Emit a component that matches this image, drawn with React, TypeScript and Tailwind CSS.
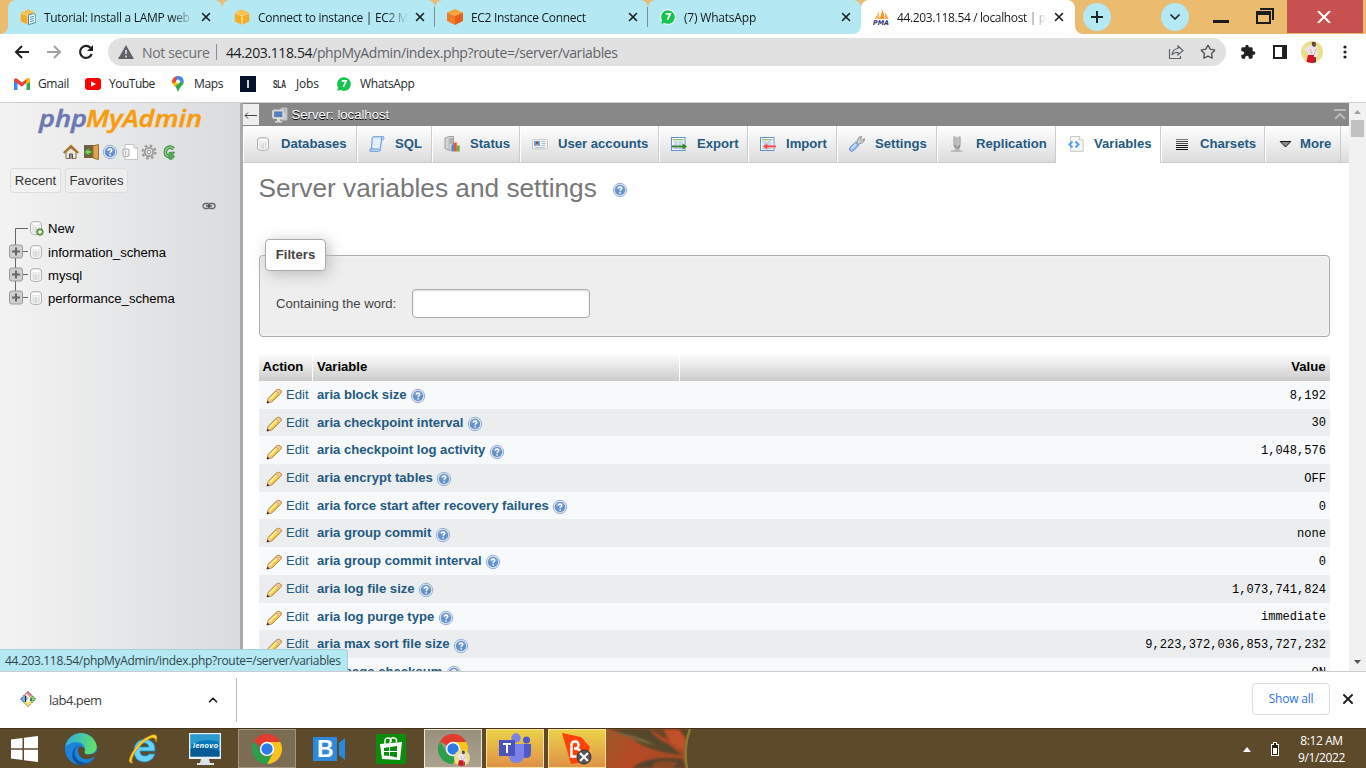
import React from "react";
import { Star, ChevronDown, ChevronUp, X } from "lucide-react";
import { MdExtension } from "react-icons/md";

const UI = "font-['Open_Sans','Noto_Sans',sans-serif]";
const ARIAL = "font-['Liberation_Sans',Arial,sans-serif]";

/* ---------- small drawings ---------- */

function Help({ className = "" }: { className?: string }) {
  return (
    <svg viewBox="0 0 16 16" className={"h-4 w-4 shrink-0 " + className}>
      <circle cx="8" cy="8" r="6.7" fill="#e9f0f8" stroke="#7f9fc9" strokeWidth="0.8" />
      <circle cx="8" cy="8" r="5" fill="#6592cb" stroke="#5a83ba" strokeWidth="0.5" />
      <path d="M4 6.500a4.300 4.300 0 0 1 8 0Q8 8 4 6.500" fill="#86abdc" />
      <path d="M6.200 6.600Q6.400 5 8 5T9.800 6.500Q9.800 7.300 8.200 8.200V9.200" fill="none" stroke="#fff" strokeWidth="1.300" />
      <rect x="7.400" y="10.200" width="1.500" height="1.400" fill="#fff" />
    </svg>
  );
}

function DbIcon({ plus = false }: { plus?: boolean }) {
  return (
    <svg viewBox="0 0 16 16" className="h-4 w-4 shrink-0">
      <path d="M2.5 4Q2.500 1.500 8 1.500T13.500 4V12Q13.500 14.500 8 14.500T2.500 12Z" fill="#f8f8f8" stroke="#b0b0b0" />
      <path d="M4.500 6.500Q8 8 11.500 6.500V12.500Q8 14 4.500 12.500Z" fill="#dadada" />
      <path d="M6 7v6M9.500 7v6" stroke="#efefef" />
      <ellipse cx="8" cy="4" rx="4.600" ry="1.800" fill="#fff" stroke="#cfcfcf" strokeWidth="0.500" />
      {plus && (
        <g>
          <circle cx="12" cy="12" r="3.300" fill="#6ea648" stroke="#3f7a24" strokeWidth="0.700" />
          <path d="M10 12h4M12 10v4" stroke="#fff" strokeWidth="1.300" />
        </g>
      )}
    </svg>
  );
}

function Pencil() {
  return (
    <svg viewBox="0 0 16 16" className="h-4 w-4 shrink-0">
      <path d="M1 15L2.200 10.400L10.600 2Q12.500.6 14.400 2T14.800 5L5.900 13.800Z" fill="#f7cf48" stroke="#a9722a" strokeWidth="1" />
      <path d="M3.600 11.400L11 4" stroke="#fff0a0" strokeWidth="1.700" />
      <path d="M10.800 2.200Q12.500 1 14 2.300T14.300 5L13.200 6L9.900 3Z" fill="#f3c3a0" />
      <path d="M9.900 3L13.200 6" stroke="#c8b48a" strokeWidth="1" />
      <path d="M1 15L2.200 10.600L5.600 13.600Z" fill="#e8cfa4" />
      <path d="M.8 15.200L1.500 12.500L3.600 14.500Z" fill="#402a16" />
    </svg>
  );
}

function NavIcon({ name }: { name: string }) {
  const cls = "h-4 w-4 shrink-0";
  switch (name) {
    case "db":
      return <DbIcon />;
    case "sql":
      return (
        <svg viewBox="0 0 16 16" className={cls}>
          <path d="M4 .7H14.500Q15.800 2.300 14 3.700H12.700L11 14.500Q10.500 15.500 9.500 15.300H1Q.3 14 1.500 12.800H2.500L3.200 2.200Q3.300 1 4 .7Z" fill="#cfe2f8" stroke="#6a9ad4" />
          <path d="M4.500 2.500H11.500L10.200 12.500H3.700Z" fill="#e3effc" />
          <path d="M1.500 13H9.500L11 14.500M12.700 3.700L12.500 1.500" stroke="#5f92cf" fill="none" />
        </svg>
      );
    case "status":
      return (
        <svg viewBox="0 0 16 16" className={cls}>
          <path d="M1 2L5 .5H9.500V13L5.500 14.500L1 12.500Z" fill="#d6d6d6" stroke="#8b8b8b" strokeWidth=".8" />
          <path d="M5 2.500V14" stroke="#aaa" strokeWidth=".7" />
          <path d="M5.500 3H9M5.500 5H9M5.500 7H9" stroke="#858585" strokeWidth=".9" />
          <path d="M7.500 8.500H9.800V15.500H7.500z" fill="#4b83de" />
          <path d="M10 6.500H12.800V15.500H10z" fill="#e8582e" />
          <path d="M13 9.500H15.700V15.500H13z" fill="#63b23c" />
        </svg>
      );
    case "users":
      return (
        <svg viewBox="0 0 16 16" className={cls}>
          <rect x=".5" y="3.500" width="15" height="9.500" rx="1" fill="#f3f3f3" stroke="#c9c9c9" />
          <rect x="2" y="5" width="6" height="5" fill="#6ba3e2" />
          <circle cx="5" cy="6.800" r="1.300" fill="#874e25" />
          <path d="M3 10Q5 6.800 7 10" fill="#e6a35b" />
          <path d="M9.500 5.500h4M9.500 7.500h4M9.500 9.500h4M3 11.700h10" stroke="#a8bfd8" />
        </svg>
      );
    case "export":
    case "import": {
      const exp = name === "export";
      return (
        <svg viewBox="0 0 16 16" className={cls}>
          <rect x=".5" y="1.500" width="13.500" height="13" fill="#fff" stroke="#5f8fd0" />
          <path d="M2 3.700h10.500" stroke="#8dbb7c" strokeWidth="1.300" />
          <path d="M2 6h10.500M2 8h10.500M2 10h10.500M2 12.500h10.500M5 5v8.500M9 5v8.500" stroke="#a9c3e4" strokeWidth=".9" />
          {exp ? (
            <path d="M1 9.500h10.500V7.300L16 10.500L11.500 13.700V11.500H1Z" fill="#37852c" />
          ) : (
            <path d="M16 9.300H7.500V7L2.500 10.400L7.500 13.800V11.500H16Z" fill="#ef4a4a" stroke="#fbd0d0" strokeWidth=".4" />
          )}
        </svg>
      );
    }
    case "settings":
      return (
        <svg viewBox="0 0 16 16" className={cls}>
          <path d="M7.500 7L9 8.500L13.200 6.800Q16 5.500 15.300 2.500L13 4.300L11.500 3L12.700.5Q9.500.3 8.700 3.500Z" fill="#ccc" stroke="#8a8a8a" strokeWidth=".9" />
          <path d="M6.600 6.200L9.800 9.300L4.500 14.700Q2.500 16 1 14.500T1 11.300Z" fill="#9bbcf0" stroke="#5b85c7" strokeWidth=".9" />
          <path d="M2.700 12.500L7 8" stroke="#d5e5ff" strokeWidth="1.300" />
        </svg>
      );
    case "replication":
      return (
        <svg viewBox="0 0 16 16" className={cls}>
          <path d="M4.500 .5V9Q5 11.500 7 12T9.500 9V.5" fill="none" stroke="#8e8e8e" strokeWidth="2" />
          <path d="M4.200 .5V9M9.200 .5V9" stroke="#d5d5d5" strokeWidth=".8" />
          <path d="M7 1V14.500" stroke="#a5a5a5" strokeWidth="1.400" />
          <path d="M1 15.200H12.500M4 14H10" stroke="#b0b0b0" strokeWidth="1.200" />
        </svg>
      );
    case "variables":
      return (
        <svg viewBox="0 0 16 16" className={cls}>
          <path d="M2.500 .5H11.500L15.200 4V15.300H2.500Z" fill="#f7f7f7" stroke="#c8c8c8" />
          <path d="M11.500 .5V4H15" fill="#fff" stroke="#c4c4c4" />
          <path d="M4.500 5.500L1.500 8.500L4.500 11.500M7.500 5.500L10.500 8.500L7.500 11.500" fill="none" stroke="#58a0ec" strokeWidth="2" />
        </svg>
      );
    case "charsets":
      return (
        <svg viewBox="0 0 16 16" className={cls} shapeRendering="crispEdges">
          <path d="M2 3.500h12" stroke="#777" />
          <path d="M2 5.500h12M2 7.500h12" stroke="#444" />
          <path d="M2 9.500h12M2 11.500h12M2 13.500h12" stroke="#111" />
        </svg>
      );
    default:
      return (
        <svg viewBox="0 0 16 16" className={cls}>
          <path d="M2.200 5.500H12.800L7.500 11Z" fill="#8d8d8d" stroke="#111" strokeWidth="1" />
        </svg>
      );
  }
}

function WhatsIcon() {
  return (
    <svg viewBox="0 0 16 16" className="h-4 w-4 shrink-0">
      <circle cx="8" cy="8" r="7.800" fill="#fff" />
      <path d="M8 1.200a6.800 6.800 0 1 1-3.200 12.800L1.300 14.800L2.100 11.400A6.800 6.800 0 0 1 8 1.200Z" fill="#13c44d" />
      <path d="M5.700 4.900H10.200L7.400 11" fill="none" stroke="#fff" strokeWidth="1.700" />
    </svg>
  );
}

function AwsBox({ doc = false }: { doc?: boolean }) {
  return (
    <svg viewBox="0 0 16 16" className="h-4 w-4 shrink-0">
      <path d="M.8 4L8 .6L15.200 4V12.400L8 15.700L.8 12.400Z" fill="#f3ad24" />
      <path d="M1 4L8 7L15 4L8 .6Z" fill="#f8c04d" />
      <path d="M7.600 6.500v9h.8v-9z" fill="#fff" />
      <path d="M.8 4L8 6.900L15.200 4" fill="none" stroke="#fae3af" strokeWidth=".7" />
      {doc && (
        <g>
          <path d="M8.500 6L13.500 4.500L15.800 6V13.500L8.500 15.600Z" fill="#fff" stroke="#3b8ac4" />
          <path d="M10 8.300l4-1M10 10.500l4-1M10 12.700l4-1" stroke="#3b8ac4" />
        </g>
      )}
    </svg>
  );
}

function OrangeCube() {
  return (
    <svg viewBox="0 0 16 16" className="h-4 w-4 shrink-0">
      <path d="M8 0L16 3.500L8 7L0 3.500Z" fill="#f9a13a" />
      <path d="M0 3.500L8 7V16L0 12Z" fill="#f47b25" />
      <path d="M16 3.500L8 7V16L16 12Z" fill="#e75f1b" />
    </svg>
  );
}

function PmaIcon() {
  return (
    <svg viewBox="0 0 16 16" className="h-4 w-4 shrink-0">
      <path d="M1.500 10Q5 6 5.500 2L6.500 10Z" fill="#fbb563" />
      <path d="M6 10Q9.500 5 8.500 0Q12 5 11 10Z" fill="#f89520" />
      <path d="M11.500 10Q13 6 11.700 3Q14.500 6 15.500 10Z" fill="#faaa4c" />
      <text x="0" y="15.500" textLength="16" lengthAdjust="spacingAndGlyphs" fontSize="6.500" fontWeight="800" fontStyle="italic" fontFamily="DejaVu Sans" fill="#33336c">PMA</text>
    </svg>
  );
}

function Avatar({ className }: { className: string }) {
  return (
    <svg viewBox="0 0 22 22" className={className}>
      <clipPath id="av"><circle cx="11" cy="11" r="11" /></clipPath>
      <g clipPath="url(#av)">
        <rect width="22" height="22" fill="#e9e08e" />
        <path d="M3 8L10 4L15 5L17 14L15 18H7V11L5 10Z" fill="#efe3e8" />
        <path d="M11 1Q15 0 15 3T13 6Q10 5 11 1Z" fill="#65483e" />
        <path d="M7 14H13V22H5Z" fill="#d01528" />
        <path d="M13 16h2v6h-2z" fill="#7a3b35" />
        <path d="M15 8L13 14M9 8L11 13" stroke="#c9b5be" />
      </g>
    </svg>
  );
}

function Chrome({ className }: { className: string }) {
  return (
    <svg viewBox="0 0 30 30" className={className}>
      <path d="M15 15L2 7.500A15 15 0 0 1 28 7.500Z" fill="#e33b2e" />
      <path d="M15 8H28.300A15 15 0 0 1 15 30L21.200 18.500Z" fill="#fcc31e" />
      <path d="M2 7.500L8.800 18.500A7 7 0 0 0 21.200 18.500L15 30A15 15 0 0 1 2 7.500Z" fill="#2c9f4b" />
      <circle cx="15" cy="15" r="7.200" fill="#fff" />
      <circle cx="15" cy="15" r="5.700" fill="#2a7de9" />
    </svg>
  );
}

/* ---------- browser frame ---------- */

const tabs = [
  { title: "Tutorial: Install a LAMP web server", icon: <AwsBox doc />, track: "tracking-[-0.3px]" },
  { title: "Connect to instance | EC2 Management", icon: <AwsBox />, track: "tracking-[-0.31px]" },
  { title: "EC2 Instance Connect", icon: <OrangeCube />, track: "tracking-[-0.31px]" },
  { title: "(7) WhatsApp", icon: <WhatsIcon />, track: "tracking-[-0.2px]" },
  { title: "44.203.118.54 / localhost | phpMyAdmin", icon: <PmaIcon />, track: "tracking-[-0.36px]" },
];

function TabStrip() {
  return (
    <div className="flex h-[34px] shrink-0 bg-[#ebbb70]">
      <div className="w-2 bg-[#b4e8f2]"><div className="h-full rounded-br-lg bg-[#ebbb70]" /></div>
      {tabs.map((t, i) => {
        const active = i === 4;
        return (
          <div key={t.title} className={active ? "w-[214px] bg-[#ebbb70]" : i === 3 ? "w-[213px] bg-gradient-to-b from-[#ebbb70] from-50% to-white to-50%" : i === 0 ? "w-[214px] bg-gradient-to-b from-[#ebbb70] from-50% to-[#b4e8f2] to-50%" : "w-[213px] bg-gradient-to-b from-[#ebbb70] from-50% to-[#b4e8f2] to-50%"}>
            <div className={"flex h-full items-center rounded-t-lg pl-3 " + (active ? "bg-white" : i === 3 ? "rounded-br-lg bg-[#b4e8f2]" : "bg-[#b4e8f2]")}>
              {t.icon}
              <div className={"ml-2 w-[150px] overflow-hidden whitespace-nowrap bg-gradient-to-r from-[#14191c] from-85% to-transparent bg-clip-text text-[12px] leading-[17px] text-transparent " + t.track}>{t.title}</div>
              <X className="ml-[5px] h-[14px] w-[14px] shrink-0 text-[#1d2124]" strokeWidth={2.8} />
              {i < 3 && <div className={"ml-auto h-5 w-px bg-[#7b8e94] " + (i === 0 ? "-mr-px" : "")} />}
            </div>
          </div>
        );
      })}
      <div className="flex flex-1 bg-white">
        <div className="flex flex-1 rounded-bl-lg bg-[#ebbb70] pl-2">
          <div className="mt-[3px] flex h-7 w-7 items-center justify-center rounded-full bg-[#b4e8f2]">
            <svg viewBox="0 0 12 12" className="h-3 w-3"><path d="M6 0v12M0 6h12" stroke="#1e2326" strokeWidth="2" /></svg>
          </div>
          <div className="ml-[50px] mt-[3px] flex h-7 w-7 items-center justify-center rounded-full bg-[#b4e8f2]"><ChevronDown className="h-4 w-4 text-[#1e2326]" strokeWidth={2.6} /></div>
          <div className="ml-6 mt-5 h-[3px] w-4 bg-[#1c1c1c]" />
          <svg viewBox="0 0 18 16" className="ml-[27px] mt-2 h-4 w-[18px]" shapeRendering="crispEdges">
            <path d="M4 1H17V12" fill="none" stroke="#1c1c1c" strokeWidth="2" />
            <path d="M1 4H14V15H1Z" fill="none" stroke="#1c1c1c" strokeWidth="2" /><path d="M0 4h15v3H0z" fill="#1c1c1c" />
          </svg>
          <div className="ml-[13px] flex h-[33px] w-[76px] items-center justify-center bg-[#c75050]">
            <svg viewBox="0 0 14 12" className="mr-[2px] h-3 w-[14px]"><path d="M1 0L13 12M13 0L1 12" stroke="#fff" strokeWidth="2" /></svg>
          </div>
        </div>
      </div>
    </div>
  );
}

function Toolbar() {
  return (
    <div className="flex h-9 shrink-0 items-center bg-white">
      <svg viewBox="0 0 16 14" className="ml-[14px] h-[14px] w-4"><path d="M8 1L2 7L8 13M2 7H15" fill="none" stroke="#202124" strokeWidth="2" /></svg>
      <svg viewBox="0 0 16 14" className="ml-4 h-[14px] w-4"><path d="M8 1L14 7L8 13M14 7H1" fill="none" stroke="#a1a2a4" strokeWidth="2" /></svg>
      <svg viewBox="0 0 16 16" className="ml-4 h-4 w-4"><path d="M13.700 10A6 6 0 1 1 12.500 3.800" fill="none" stroke="#202124" strokeWidth="2.200" /><path d="M15 1V7H9Z" fill="#202124" /></svg>
      <div className="ml-[14px] flex h-7 w-[1118px] items-center rounded-full bg-[#e1e1e1] text-[14px]">
        <svg viewBox="0 0 16 14" className="ml-[10px] h-[14px] w-4"><path d="M8 0L16 14H0Z" fill="#5f6368" /><path d="M8 5v4M8 10.500v2" stroke="#e1e1e1" strokeWidth="1.600" /></svg>
        <span className="ml-2 w-[74px] whitespace-nowrap tracking-[-0.34px] text-[#6c6f73]">Not secure</span>
        <span className="h-4 w-px bg-[#8b8d90]" />
        <span className="ml-[9px] whitespace-nowrap tracking-[-0.38px] text-[#5f6368]"><span className="text-[#202124]">44.203.118.54</span>/phpMyAdmin/index.php?route=/server/variables</span>
        <svg viewBox="0 0 16 16" className="ml-auto h-4 w-4"><path d="M1.500 5V14.500H12.500V12M10 2L15 6.500L10 11V8.500Q6 8 4 11Q4.500 5 10 4.500Z" fill="none" stroke="#5f6368" strokeWidth="1.200" /></svg>
        <Star className="ml-4 mr-[10px] h-4 w-4 text-[#505357]" strokeWidth={2} />
      </div>
      <MdExtension className="ml-[14px] h-4 w-4 text-[#202124]" />
      <svg viewBox="0 0 14 14" className="ml-[17px] h-[14px] w-[14px]"><path d="M1 1H13V13H1Z" fill="#fff" stroke="#202124" strokeWidth="2" /><path d="M9 0h5v14H9z" fill="#202124" /></svg>
      <Avatar className="ml-[14px] h-[22px] w-[22px]" />
      <svg viewBox="0 0 4 14" className="ml-5 h-[14px] w-1" fill="#202124"><circle cx="2" cy="2" r="1.600" /><circle cx="2" cy="7" r="1.600" /><circle cx="2" cy="12" r="1.600" /></svg>
    </div>
  );
}

function Bookmarks() {
  return (
    <div className="flex h-[33px] shrink-0 items-center border-b border-[#cfcfcf] bg-white pb-1 text-[12px] tracking-[-0.2px] text-[#24282c]">
      <svg viewBox="0 0 16 12" className="ml-[14px] h-3 w-4"><path d="M0 1.500V12H3.500V5Z" fill="#4285f4" /><path d="M12.500 5V12H16V1.500Z" fill="#34a853" /><path d="M0 1.500Q1.500-.5 3.500 1L8 4.500L12.500 1Q14.500-.5 16 1.500L8 8.700L0 3Z" fill="#ea4335" /><path d="M12.500 1Q14.500-.5 16 1.500V4L12.500 6.300Z" fill="#fbbc04" /></svg>
      <span className="ml-2 w-[39px] tracking-[-0.35px]">Gmail</span>
      <svg viewBox="0 0 16 12" className="ml-2 h-3 w-4"><rect width="16" height="12" rx="3" fill="#f00" /><path d="M6 3.200L11 6L6 8.800Z" fill="#fff" /></svg>
      <span className="ml-2 w-[54px] tracking-[-0.5px]">YouTube</span>
      <svg viewBox="0 0 12 16" className="ml-[9px] h-4 w-3"><path d="M6 16Q5 12 2 9Q0 7 .2 5L6 6L11.800 5Q12 8 9.500 10Q7 13 6 16Z" fill="#34a853" /><path d="M.2 6Q0 2 3 .8L8.500 5L3 11Q.5 8 .2 6Z" fill="#fbbc04" /><path d="M1 3Q3-.5 7 .1L4 6L.2 7Q0 4 1 3Z" fill="#ea4335" /><path d="M5 .1Q11.500-.3 11.800 6L8 5.500L4 3Z" fill="#4285f4" /><circle cx="6" cy="5.500" r="2.100" fill="#fff" /></svg>
      <span className="ml-[10px] w-[38px] tracking-[-0.35px]">Maps</span>
      <div className="ml-2 flex h-4 w-4 items-center justify-center bg-[#06122b]"><div className="h-2 w-[2px] bg-[#ccd0d8]" /></div>
      <svg viewBox="0 0 14 10" className="ml-[17px] h-[10px] w-[14px]"><text x="0" y="9" textLength="13" lengthAdjust="spacingAndGlyphs" fontSize="10" fontWeight="700" fontFamily="Liberation Sans" fill="#333">SLA</text></svg>
      <span className="ml-[9px] w-[34px]">Jobs</span>
      <div className="ml-[6px]"><WhatsIcon /></div>
      <span className="ml-2 tracking-[-0.35px]">WhatsApp</span>
    </div>
  );
}

/* ---------- phpMyAdmin ---------- */

function Tree() {
  const items = ["New", "information_schema", "mysql", "performance_schema"];
  return (
    <div className="mt-[6px] pl-2 text-[13.120px] leading-[23px] text-black">
      {items.map((n, i) => (
        <div key={n} className={"flex items-center " + (i === 0 ? "h-[24px]" : "h-[23.330px]")}>
          <svg viewBox="0 0 20 24" className="h-6 w-5 shrink-0">
            {i === 0 ? <path d="M7.500 24V12.500H21" fill="none" stroke="#666" /> : (
              <g>
                <path d={i === 3 ? "M7.500 0V12M14 11.500H21" : "M7.500 0V24M14 11.500H21"} stroke="#666" />
                <rect x="1.500" y="5" width="13" height="13" rx="2" fill="#cfcfcf" stroke="#999" />
                <path d="M4 11.500H12M8 7.500V15.500" stroke="#666" strokeWidth="2" />
              </g>
            )}
          </svg>
          <DbIcon plus={i === 0} />
          <span className="ml-1 pt-px">{n}</span>
        </div>
      ))}
    </div>
  );
}

function Sidebar() {
  return (
    <aside className="flex w-[243px] shrink-0 flex-col border-r-[3px] border-[#aaa] bg-gradient-to-r from-[#f3f3f3] to-[#d9dbdd]">
      <svg viewBox="0 0 168 32" className="ml-9 h-8 w-[168px] shrink-0" fontFamily="Open Sans" fontWeight="600" fontStyle="italic" fontSize="23">
        <text x="3" y="24" textLength="48" lengthAdjust="spacingAndGlyphs" fill="#6c78af" stroke="#6c78af" strokeWidth=".5">php</text>
        <text x="50" y="24" textLength="116" lengthAdjust="spacingAndGlyphs" fill="#f89c0e" stroke="#f89c0e" strokeWidth=".5">MyAdmin</text>
      </svg>
      <div className="ml-[63px] mt-[9px] flex gap-[3.600px]">
        <svg viewBox="0 0 16 16" className="h-4 w-4"><path d="M3 8V14.500H13V8L8 4Z" fill="#eee7dc" stroke="#86724c" /><path d="M6.500 15V10H9.500V15" fill="#999" stroke="#555" /><path d="M.7 9L8 2L15.300 9" fill="none" stroke="#a9712b" strokeWidth="2.200" /></svg>
        <svg viewBox="0 0 16 16" className="h-4 w-4"><path d="M1 1H14V14H1Z" fill="#765f45" /><path d="M10 2L15.500 .5V15.500L10 14Z" fill="#e0a352" stroke="#a56d27" /><path d="M8.500 6.500H6V4L1 8L6 12V9.500H8.500Z" fill="#84c75e" stroke="#3f8a2c" /></svg>
        <Help />
        <svg viewBox="0 0 16 16" className="h-4 w-4"><path d="M3 .5H12L15.500 4V15.500H3Z" fill="#fff" stroke="#c5c5c5" /><path d="M12 .5V4H15.500" fill="none" stroke="#bbb" /><path d="M1 5.500Q4 4 7 5.500V12Q4 13.500 1 12Z" fill="#eee" stroke="#aaa" /><path d="M3.500 7v4" stroke="#bbb" /></svg>
        <svg viewBox="0 0 16 16" className="h-4 w-4"><circle cx="8" cy="8" r="6.500" fill="none" stroke="#999" strokeWidth="2.200" strokeDasharray="2.600 2.500" /><circle cx="8" cy="8" r="4.300" fill="#ddd" stroke="#a0a0a0" strokeWidth="2" /><circle cx="8" cy="8" r="1.700" fill="#eee" stroke="#999" /></svg>
        <svg viewBox="0 0 16 16" className="h-4 w-4"><path d="M12.500 5Q10 2.200 7 3.700T4.500 9T8.500 12" fill="none" stroke="#3b8b3b" strokeWidth="3.600" /><path d="M12.500 5Q10 2.200 7 3.700T4.500 9T8.500 12" fill="none" stroke="#86c988" strokeWidth="1.800" /><path d="M8 8.500L13.500 8L12 10.500L13.500 13L10.500 15.500L8 15Z" fill="#57aa58" stroke="#3b8b3b" strokeWidth=".8" /></svg>
      </div>
      <div className="ml-[10px] mt-2 flex gap-1 text-[13.120px] text-[#333]">
        <div className="flex h-[25px] w-[51px] items-center justify-center whitespace-nowrap rounded-[3px] border border-[#ddd] bg-[#f2f2f2]">Recent</div>
        <div className="flex h-[25px] w-[63px] items-center justify-center whitespace-nowrap rounded-[3px] border border-[#ddd] bg-[#eeeeef]">Favorites</div>
      </div>
      <svg viewBox="0 0 14 8" className="ml-[202px] mt-[9px] h-2 w-[14px] shrink-0"><rect x="1" y="1.500" width="6.500" height="5" rx="2.500" fill="none" stroke="#666" strokeWidth="1.300" /><rect x="6.500" y="1.500" width="6.500" height="5" rx="2.500" fill="none" stroke="#666" strokeWidth="1.300" /><path d="M4 4h6" stroke="#444" strokeWidth="1.300" /></svg>
      <Tree />
    </aside>
  );
}

const nav = [
  { t: "Databases", i: "db", w: "w-[114px] pl-[11px]" },
  { t: "SQL", i: "sql", w: "w-[75px] pl-[11px]" },
  { t: "Status", i: "status", w: "w-[88px] pl-[11px]" },
  { t: "User accounts", i: "users", w: "w-[139px] pl-[11px]" },
  { t: "Export", i: "export", w: "w-[89px] pl-[11px]" },
  { t: "Import", i: "import", w: "w-[89px] pl-[11px]" },
  { t: "Settings", i: "settings", w: "w-[100px] pl-[11px]" },
  { t: "Replication", i: "replication", w: "w-[119px] pl-3" },
  { t: "Variables", i: "variables", w: "w-[105px] pl-[11px]" },
  { t: "Charsets", i: "charsets", w: "w-[104px] pl-3" },
  { t: "More", i: "more", w: "w-[76px] pl-3" },
];

const rows: [string, string][] = [
  ["aria block size", "8,192"],
  ["aria checkpoint interval", "30"],
  ["aria checkpoint log activity", "1,048,576"],
  ["aria encrypt tables", "OFF"],
  ["aria force start after recovery failures", "0"],
  ["aria group commit", "none"],
  ["aria group commit interval", "0"],
  ["aria log file size", "1,073,741,824"],
  ["aria log purge type", "immediate"],
  ["aria max sort file size", "9,223,372,036,853,727,232"],
  ["aria page checksum", "ON"],
];

function MainPanel() {
  return (
    <main className="flex min-w-0 flex-1 flex-col overflow-hidden bg-white">
      <div className="flex h-[23px] shrink-0 items-center bg-[#888]">
        <div className="flex h-[21px] w-4 items-center justify-center bg-[#eee]"><svg viewBox="0 0 14 8" className="h-2 w-[14px]"><path d="M4 1.500L1 4.500L4 7.500M1 4.500H13" fill="none" stroke="#444" /></svg></div>
        <svg viewBox="0 0 16 16" className="ml-[13px] h-4 w-4"><path d="M9 1H15V13H9Z" fill="#ccc" stroke="#bbb" /><path d="M10.500 3h3M10.500 5h3" stroke="#888" /><rect x=".7" y="3" width="11" height="8.500" rx="1" fill="#ccc" stroke="#ddd" /><rect x="2.200" y="4.500" width="8" height="5.500" fill="#537fc0" /><path d="M5 12H8V14H10V15.500H3V14H5Z" fill="#ddd" /></svg>
        <span className="ml-[3.500px] text-[13.120px] text-white [text-shadow:0_1px_0_#000]">Server: localhost</span>
        <svg viewBox="0 0 12 11" className="ml-auto mr-[3px] h-[11px] w-3"><path d="M0 1H12M1 10L6 5L11 10" fill="none" stroke="#b9b9b9" strokeWidth="2" /></svg>
      </div>
      <nav className="flex h-[37px] shrink-0 border-b border-[#ccc] bg-gradient-to-b from-white to-[#dcdcdc] text-[13.120px] font-bold text-[#235a81]">
        {nav.map((n) => (
          <div key={n.t} className={"flex shrink-0 items-center border-l border-r border-l-white border-r-[#ccc] " + n.w + (n.i === "variables" ? " -mb-px bg-white pb-[2px]" : " pb-px")}>
            <NavIcon name={n.i} />
            <span className={"whitespace-nowrap " + (n.i === "more" ? "ml-[6px]" : "ml-[10px]")}>{n.t}</span>
          </div>
        ))}
      </nav>
      <div className="flex h-[50px] shrink-0 items-center pl-[15.500px]">
        <h1 className="whitespace-nowrap text-[26.240px] leading-8 text-[#777]">Server variables and settings</h1>
        <Help className="ml-[15.500px] mt-[3px]" />
      </div>
      <fieldset className="ml-4 mt-[26px] h-[98px] w-[1071px] shrink-0 rounded border border-[#aaa] bg-[#eee] px-[5px] text-[13.120px] text-[#444] shadow-[inset_0_0_2px_#fff]">
        <legend className="flex h-8 w-[61px] items-center justify-center rounded-sm border border-[#aaa] bg-white font-bold shadow-[3px_3px_15px_#bbb]">Filters</legend>
        <div className="mt-[18px] flex items-center pl-[11px]">
          <label className="w-[136px] whitespace-nowrap">Containing the word:</label>
          <input className="h-[29px] w-[178px] rounded-sm border border-[#aaa] bg-white shadow-[inset_0_1px_2px_#ddd]" />
        </div>
      </fieldset>
      <div className="ml-4 mt-4 w-[1071px] shrink-0 text-[13.120px]">
        <div className="flex h-7 items-center bg-gradient-to-b from-white to-[#ccc] font-bold text-black">
          <div className="flex h-full w-[54px] items-center border-r border-white pl-[3.500px]">Action</div>
          <div className="flex h-full w-[367px] items-center border-r border-white pl-1">Variable</div>
          <div className="ml-auto pr-[4.500px]">Value</div>
        </div>
        {rows.map(([k, v], i) => (
          <div key={k} className={"flex h-[27.700px] items-center text-[#235a81] " + (i % 2 ? "bg-[#ebedee]" : "bg-[#f7f9fb]")}>
            <div className="flex w-[58px] items-center pl-[7.400px]"><div className="pt-[3px]"><Pencil /></div><span className="ml-[3.600px]">Edit</span></div>
            <span className="font-bold">{k}</span>
            <Help className="ml-[3.500px] mt-[3px]" />
            <span className="ml-auto pr-1 pt-[2px] font-['Liberation_Mono',monospace] text-[12.060px] text-black">{v}</span>
          </div>
        ))}
      </div>
    </main>
  );
}

function Scrollbar() {
  return (
    <div className="flex w-[17px] shrink-0 flex-col items-center bg-[#f1f1f1]">
      <svg viewBox="0 0 17 17" className="h-[17px] w-[17px] shrink-0"><path d="M5 11L8.500 7L12 11Z" fill="#a0a0a0" /></svg>
      <div className="h-[17px] w-[13px] bg-[#c1c1c1]" />
      <svg viewBox="0 0 17 17" className="mt-auto h-[17px] w-[17px]"><path d="M5 6L8.500 10L12 6Z" fill="#505050" /></svg>
    </div>
  );
}

/* ---------- bottom bars ---------- */

function DownloadBar() {
  return (
    <div className="flex h-[57px] shrink-0 items-center border-t border-[#ccc] bg-white">
      <svg viewBox="0 0 16 16" className="mb-[2px] ml-5 h-4 w-4"><path d="M8 0L12 4L8 8L4 4Z" fill="#f08789" /><path d="M12 4L16 8L12 12L8 8Z" fill="#8bcf73" /><path d="M8 8L12 12L8 16L4 12Z" fill="#f2e574" /><path d="M4 4L8 8L4 12L0 8Z" fill="#78b0ee" /><path d="M8 .5L15.500 8L8 15.500L.5 8Z" fill="none" stroke="#222" strokeWidth=".8" strokeDasharray="1.500 1.500" /><path d="M6 3L10 8M10 8L7 11" stroke="#fff" strokeWidth="1.500" /><path d="M5.500 5v6M11 7v3" stroke="#222" /></svg>
      <span className="ml-[13px] w-[157px] pt-[2px] text-[13px] tracking-[-0.5px] text-[#3c4043]">lab4.pem</span>
      <ChevronUp className="h-[14px] w-[14px] text-[#202124]" strokeWidth={3} />
      <div className="ml-4 h-11 w-px bg-[#b9b9b9]" />
      <div className="mb-[2px] ml-auto flex h-8 w-[78px] items-center justify-center rounded border border-[#dadce0] text-[12px] font-medium tracking-[-0.200px] text-[#2a73e8]">Show all</div>
      <X className="mb-[2px] ml-[10px] mr-[10px] h-4 w-4 text-[#202124]" strokeWidth={3} />
    </div>
  );
}

function Leaf() {
  return (
    <svg viewBox="0 0 100 39" className="absolute left-[602px] top-0 h-[39px] w-[100px]">
      <defs>
        <linearGradient id="leaf" x1="0" y1="0" x2="1" y2="0.300"><stop stopColor="#9a5a2a" /><stop offset=".5" stopColor="#b54a26" /><stop offset="1" stopColor="#a84a24" /></linearGradient>
        <filter id="soft"><feGaussianBlur stdDeviation="0.900" /></filter>
      </defs>
      <path d="M0 0H88Q82 20 85 39H0Z" fill="url(#leaf)" />
      <g filter="url(#soft)">
        <path d="M8 0H48Q52 9 66 15L80 26Q58 24 40 16Q26 6 8 0Z" fill="#55462a" />
        <path d="M12 3Q34 6 56 17L40 13Z" fill="#7d6a40" />
        <path d="M48 0H62L68 10L60 8Z" fill="#6b4527" />
        <path d="M62 2H84L82 22L70 14Z" fill="#c2512a" />
        <path d="M76 0H90L86 12Z" fill="#5a4528" />
        <path d="M30 39Q46 26 80 30L84 39Z" fill="#54422a" />
        <path d="M52 34Q64 30 76 34L70 39H50Z" fill="#8a4a28" />
      </g>
      <path d="M88 0Q81 20 85 39" stroke="#8a7a35" strokeWidth="2.500" fill="none" />
    </svg>
  );
}

function Taskbar() {
  return (
    <div className="relative flex h-10 shrink-0 items-center border-t border-[#43331c] bg-[#5d4a2b]">
      <Leaf />
      <svg viewBox="0 0 28 26" className="ml-[11px] h-[26px] w-7" fill="#fff"><path d="M0 3.500L11.500 2V12.300H0ZM13 1.800L27 0V12.300H13ZM0 13.700H11.500V24L0 22.500ZM13 13.700H27V26L13 24.200Z" /></svg>
      <svg viewBox="0 0 32 32" className="ml-[26px] h-8 w-8">
        <defs>
          <linearGradient id="edge" x1="0" y1="0" x2="1" y2="0.200"><stop stopColor="#2ea7e8" /><stop offset="1" stopColor="#5fe06b" /></linearGradient>
          <clipPath id="edgeClip"><circle cx="16" cy="16" r="16" /></clipPath>
        </defs>
        <g clipPath="url(#edgeClip)">
          <rect width="32" height="32" fill="#1a86db" />
          <path d="M0 14Q2 0 17 0Q31 1 32 14Q31 21 23 21.500Q18 21.500 20 17Q20 11 14 9.500Q6 8 0 14Z" fill="url(#edge)" />
          <path d="M14 12Q8 16 10 23Q13 30 22 30L28 26L20 32H14Q5 27 8 18Q10 13 14 12Z" fill="#124f9f" />
          <path d="M14 13.500Q11 20 16 24.500Q22 28 29 24L33 27V16Q31 21.500 23 21.500Q18 21.500 20 17Q19 13 14 13.500Z" fill="#5d4a2b" />
        </g>
      </svg>
      <svg viewBox="0 0 32 32" className="ml-[31px] h-8 w-8"><path d="M27 18H12Q12 23 17 23Q20 23 21 21H27Q24 29 16 29Q6 28 6 18T16 6Q28 7 27 18ZM12 14H21Q20 10 16.500 10T12 14Z" fill="#69d0f8" stroke="#1593d8" strokeWidth=".8" /><path d="M5 30Q-2 31 4 20Q12 6 24 2Q31 0 28 9Q28 4 23 5Q13 9 6 21Q2 29 5 30Z" fill="#ffd52d" stroke="#c78a13" strokeWidth=".7" /></svg>
      <svg viewBox="0 0 32 32" className="ml-[29px] h-8 w-8"><rect width="32" height="26" fill="#e9eef2" /><rect x="1.500" y="1.500" width="29" height="22" fill="#0879b9" /><path d="M1.500 1.500h29V9Q16 4 1.500 12Z" fill="#2b9cd0" /><path d="M1.500 16Q12 12 30.500 18V23.500H1.500Z" fill="#075b94" /><path d="M12 26h8l1 4h4v2H8v-2h3Z" fill="#dce3e8" /><text x="4" y="15" fontFamily="Liberation Sans" fontWeight="700" fontStyle="italic" fontSize="7" textLength="25" fill="#fff">lenovo</text></svg>
      <div className="ml-[17px] flex h-[39px] w-[58px] items-center justify-center border border-[#a19783] bg-[#7c6c53]"><Chrome className="h-[30px] w-[30px]" /></div>
      <svg viewBox="0 0 32 24" className="ml-[17px] h-6 w-8"><rect width="24" height="24" fill="#2f89db" /><path d="M32 1L26 6V18L32 23Z" fill="#238be3" /><text x="4" y="20" fontFamily="Liberation Sans" fontWeight="700" fontSize="23" fill="#fff">B</text></svg>
      <svg viewBox="0 0 30 30" className="ml-[31px] h-[30px] w-[30px]"><rect width="30" height="30" fill="#098d0b" /><path d="M4 10L26 8L24 26L6 25Z" fill="#fff" /><path d="M9 10Q8 4 12 4T15 8M14 9Q14 3 18 4T20 8" fill="none" stroke="#fff" strokeWidth="1.500" /><path d="M8 14L13 13V17H8ZM14 13L21 12V17H14ZM8 18H13V22L8 21.500ZM14 18H21V23.500L14 22Z" fill="#098d0b" /></svg>
      <div className="z-10 ml-[18px] flex h-[39px] w-[58px] items-center justify-center border border-[#eee6da] bg-gradient-to-b from-[#99907c] to-[#aaa18f]">
        <div className="relative"><Chrome className="h-[30px] w-[30px]" /><Avatar className="absolute bottom-[-2px] right-[-2px] h-4 w-4" /></div>
      </div>
      <div className="z-10 ml-1 flex h-[39px] w-[58px] items-center justify-center border border-[#ffe39a] bg-gradient-to-b from-[#ead147] to-[#df9147]">
        <svg viewBox="0 0 32 32" className="h-8 w-8"><circle cx="17" cy="5" r="4.700" fill="#7b83eb" /><circle cx="27.500" cy="7" r="3.500" fill="#5059c9" /><path d="M23 11H32V20Q32 25 27 25Q23 25 23 20Z" fill="#5059c9" /><path d="M10 11H25V22Q25 30 17 30Q10 30 10 22Z" fill="#7b83eb" /><rect y="7" width="16" height="16" fill="#4b53bc" /><path d="M4 11h8M8 11v9" stroke="#fff" strokeWidth="2" /></svg>
      </div>
      <div className="z-10 ml-1 flex h-[39px] w-[58px] items-center justify-center border border-[#ffe39a] bg-gradient-to-b from-[#ead147] to-[#df9147]">
        <svg viewBox="0 0 32 32" className="h-8 w-8"><path d="M1 0L20 4L29 14L25 29L10 31Z" fill="#ff4208" /><path d="M16 23.500H10.500V12Q10.500 8.500 14 8.500T17.500 12Q17.500 15.500 13 15.500Q19.500 15.500 19.500 19.500" fill="none" stroke="#fff" strokeWidth="2.400" /><circle cx="23" cy="24" r="7" fill="#555" stroke="#333" /><path d="M19 20L27 28M27 20L19 28" stroke="#fff" strokeWidth="2.200" /></svg>
      </div>
      <svg viewBox="0 0 8 5" className="ml-auto mt-px h-[5px] w-2"><path d="M0 5L4 0L8 5Z" fill="#fff" /></svg>
      <svg viewBox="0 0 8 14" className="ml-5 h-[14px] w-2" shapeRendering="crispEdges"><path d="M.5 2.500H2.500V.5H5.500V2.500H7.500V13.500H.5Z" fill="#2b2115" stroke="#fff" /><path d="M2 6h4v6H2z" fill="#fff" /></svg>
      <div className="ml-[18px] mr-5 flex w-[49px] flex-col items-center whitespace-nowrap pt-px text-[12px] leading-[17px] tracking-[-0.400px] text-white"><span>8:12 AM</span><span>9/1/2022</span></div>
    </div>
  );
}

export default function App() {
  return (
    <div className={"flex h-[768px] w-[1366px] flex-col overflow-hidden " + UI}>
      <TabStrip />
      <Toolbar />
      <Bookmarks />
      <div className="relative flex min-h-0 flex-1">
        <div className={"flex min-w-0 flex-1 overflow-hidden " + ARIAL}>
          <Sidebar />
          <MainPanel />
          <Scrollbar />
        </div>
        <div className="absolute bottom-0 left-0 flex h-[22px] w-[348px] items-center whitespace-nowrap rounded-tr-[4px] border-r border-t border-[#a6cfd8] bg-[#b4e8f2] pl-[5px] text-[12px] tracking-[-0.325px] text-[#33464c]">44.203.118.54/phpMyAdmin/index.php?route=/server/variables</div>
      </div>
      <DownloadBar />
      <Taskbar />
    </div>
  );
}
